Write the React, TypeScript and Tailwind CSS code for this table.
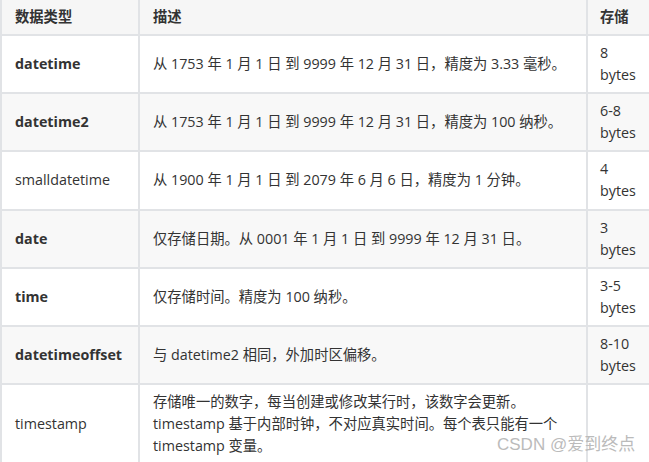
const rows = [
  { name: 'datetime', bold: true, desc: ['从 1753 年 1 月 1 日 到 9999 年 12 月 31 日，精度为 3.33 毫秒。'], size: '8 bytes' },
  { name: 'datetime2', bold: true, desc: ['从 1753 年 1 月 1 日 到 9999 年 12 月 31 日，精度为 100 纳秒。'], size: '6-8 bytes' },
  { name: 'smalldatetime', bold: false, desc: ['从 1900 年 1 月 1 日 到 2079 年 6 月 6 日，精度为 1 分钟。'], size: '4 bytes' },
  { name: 'date', bold: true, desc: ['仅存储日期。从 0001 年 1 月 1 日 到 9999 年 12 月 31 日。'], size: '3 bytes' },
  { name: 'time', bold: true, desc: ['仅存储时间。精度为 100 纳秒。'], size: '3-5 bytes' },
  { name: 'datetimeoffset', bold: true, desc: ['与 datetime2 相同，外加时区偏移。'], size: '8-10 bytes' },
  {
    name: 'timestamp',
    bold: false,
    desc: [
      '存储唯一的数字，每当创建或修改某行时，该数字会更新。',
      'timestamp 基于内部时钟，不对应真实时间。每个表只能有一个',
      'timestamp 变量。',
    ],
    size: '',
  },
]

export default function App() {
  return (
    <div className="relative w-[649px] h-[462px] overflow-hidden bg-white text-[14.3px] leading-[22px] text-[#333] font-['Open_Sans','Noto_Sans_CJK_SC',sans-serif]">
      <table className="w-[660px] border-collapse table-fixed">
        <colgroup>
          <col className="w-[138px]" />
          <col className="w-[448px]" />
          <col className="w-[74px]" />
        </colgroup>
        <thead>
          <tr className="bg-[#f6f6f6]">
            <th className="border-2 border-t-0 border-[#e1e3e6] px-[13px] py-[6px] text-left font-bold">数据类型</th>
            <th className="border-2 border-t-0 border-[#e1e3e6] px-[13px] py-[6px] text-left font-bold">描述</th>
            <th className="border-2 border-t-0 border-[#e1e3e6] pl-[12px] pr-[12px] py-[6px] text-left font-bold">存储</th>
          </tr>
        </thead>
        <tbody>
          {rows.map((r, i) => (
            <tr key={r.name} className={i % 2 === 1 ? 'bg-[#f8f8f8]' : 'bg-white'}>
              <td className={`border-2 border-[#e1e3e6] px-[13px] py-[6.1px] align-middle ${r.bold ? 'font-bold' : ''}`}>{r.name}</td>
              <td className="border-2 border-[#e1e3e6] px-[13px] py-[6.1px] align-middle">
                {r.desc.map((d) => (
                  <div key={d}>{d}</div>
                ))}
              </td>
              <td className="border-2 border-[#e1e3e6] pl-[12px] pr-[14px] py-[6.1px] align-middle">{r.size}</td>
            </tr>
          ))}
        </tbody>
      </table>
      <div className="absolute left-[497px] top-[433px] text-[17px] leading-[24px] text-[#bbbbbb] font-['Liberation_Sans','Noto_Sans_CJK_SC',sans-serif]">
        CSDN @爱到终点
      </div>
    </div>
  )
}
